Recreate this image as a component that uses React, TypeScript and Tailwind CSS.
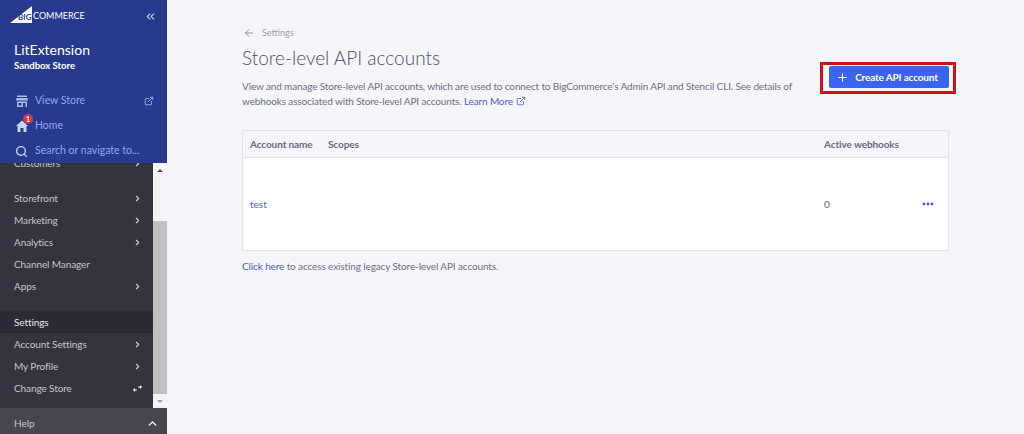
import React from "react";
import { ChevronsLeft, ChevronRight, ChevronUp, ExternalLink, Search, Plus, ArrowLeft } from "lucide-react";

function NavRow({ label, chevron, active }: { label: string; chevron?: boolean; active?: boolean }) {
  return (
    <div className={`h-[22px] flex items-center pl-[14px] pr-[11px] justify-between text-[10px] tracking-[-0.1px] ${active ? "bg-[#2c2b35] text-[#e4e4ea]" : "text-[#c4c4cc]"}`}>
      <span>{label}</span>
      {chevron && <ChevronRight size={9} strokeWidth={3} className="text-[#d0d0d8]" />}
    </div>
  );
}

function Sidebar() {
  return (
    <aside className="w-[167px] h-[434px] shrink-0 flex flex-col bg-[#35343e]">
      <div className="h-[163px] shrink-0 bg-[#273a8f] flex flex-col relative z-10">
        <div className="h-[33px] pl-[10px] pr-[10px] flex items-center justify-between">
          <div className="relative h-[17px] w-[76px] mb-[5px]">
            <svg width="23" height="17" viewBox="0 0 23 17" className="absolute left-0 top-0">
              <path d="M0 17 L22 0 L22 17 Z" fill="#ffffff" />
            </svg>
            <span className="absolute left-[8px] top-[5px] text-[8px] leading-[12px] font-bold text-[#273a8f]">BIG</span>
            <span className="absolute left-[23px] top-[4px] text-[9px] leading-[12px] text-white">COMMERCE</span>
          </div>
          <ChevronsLeft size={13} className="text-[#c4d0f2]" />
        </div>
        <div className="pl-[14px] mt-[8px] text-[14px] leading-[18px] text-white">LitExtension</div>
        <div className="pl-[14px] mt-[1px] text-[9.5px] leading-[12px] font-bold text-white">Sandbox Store</div>
        <div className="h-[25px] mt-[16px] flex items-center pl-[16px] pr-[13px]">
          <svg width="12" height="12" viewBox="0 0 12 12" className="mr-[7px]" fill="#a8bbee">
            <path d="M1 0.5 H11 V2 H1 Z" />
            <path d="M0.5 3 H11.5 L12 5.5 H0 Z" />
            <path d="M1 6.5 H11 V12 H9.5 V8 H7 V12 H1 Z M2.5 8 V10.5 H5.5 V8 Z" fillRule="evenodd" />
          </svg>
          <span className="text-[10.5px] text-[#8ea6ee] flex-1">View Store</span>
          <ExternalLink size={10} className="text-[#a8bbee]" />
        </div>
        <div className="h-[25px] flex items-center pl-[16px] relative">
          <svg width="12" height="12" viewBox="0 0 12 12" className="mr-[7px]" fill="#c8d4f6">
            <path d="M6 0.5 L12 6 H10.5 V12 H7.5 V8 H4.5 V12 H1.5 V6 H0 Z" />
          </svg>
          <span className="text-[10.5px] text-[#8ea6ee]">Home</span>
          <span className="absolute left-[23px] top-[1px] w-[10px] h-[10px] rounded-full bg-[#db3643] text-white text-[7px] leading-[10px] font-bold text-center">1</span>
        </div>
        <div className="h-[25px] flex items-center pl-[15px] pt-[1px]">
          <Search size={13} strokeWidth={2.5} className="text-[#c8d4f6] mr-[7px]" />
          <span className="text-[10.5px] text-[#8ea6ee]">Search or navigate to...</span>
        </div>
      </div>
      <div className="h-[245px] flex overflow-hidden">
        <div className="w-[153px] shrink-0">
          <div className="-mt-[11px]">
            <NavRow label="Customers" chevron />
          </div>
          <div className="h-[13px]" />
          <NavRow label="Storefront" chevron />
          <NavRow label="Marketing" chevron />
          <NavRow label="Analytics" chevron />
          <NavRow label="Channel Manager" />
          <NavRow label="Apps" chevron />
          <div className="h-[14px]" />
          <NavRow label="Settings" active />
          <NavRow label="Account Settings" chevron />
          <NavRow label="My Profile" chevron />
          <div className="h-[22px] flex items-center pl-[14px] pr-[11px] justify-between text-[10px] tracking-[-0.1px] text-[#c4c4cc]">
            <span>Change Store</span>
            <svg width="9" height="7" viewBox="0 0 9 7" fill="none" stroke="#e4e4ea" strokeWidth="1.1">
              <path d="M0.5 5 H4 M2 3.6 L0.5 5 L2 6.4" />
              <path d="M8.5 2 H5 M7 0.6 L8.5 2 L7 3.4" />
            </svg>
          </div>
        </div>
        <div className="w-[14px] shrink-0 bg-[#f4f4f4] flex flex-col">
          <div className="h-[14px] flex items-center justify-center">
            <div className="w-0 h-0 border-x-[3px] border-x-transparent border-b-[3px] border-b-[#505050]" />
          </div>
          <div className="h-[44px]" />
          <div className="flex-1 bg-[#c1c1c1]" />
          <div className="h-[14px] flex items-center justify-center">
            <div className="w-0 h-0 border-x-[3px] border-x-transparent border-t-[3px] border-t-[#a3a3a3]" />
          </div>
        </div>
      </div>
      <div className="h-[26px] bg-[#47454f] flex items-center justify-between pl-[14px] pr-[8px] pt-[5px] text-[10px] text-[#c4c4cc]">
        <span>Help</span>
        <ChevronUp size={13} strokeWidth={2.5} className="text-white" />
      </div>
    </aside>
  );
}

export default function App() {
  return (
    <div className="w-[1024px] h-[434px] overflow-hidden flex bg-[#f5f6fa] text-[#5e637a] font-['Lato',sans-serif]">
      <Sidebar />
      <main className="flex-1 pl-[75px] pr-[75px] pt-[26px]">
        <div className="flex items-center h-[14px] text-[9px] text-[#9aa0b0]">
          <ArrowLeft size={12} className="text-[#8f94a8] ml-[1px] mr-[7px]" />
          <span>Settings</span>
        </div>
        <div className="flex justify-between">
          <div className="w-[556px]">
            <h1 className="mt-[5px] text-[19px] leading-[26px] font-light text-[#4d5166]">Store-level API accounts</h1>
            <p className="mt-[8px] text-[10px] leading-[15px] tracking-[-0.14px] text-[#6c7086]">
              View and manage Store-level API accounts, which are used to connect to BigCommerce's Admin API and Stencil CLI. See details of webhooks associated with Store-level API accounts.{" "}
              <span className="text-[#4e60c6]">Learn More <ExternalLink size={10} className="inline align-[-1px] ml-[1px]" /></span>
            </p>
          </div>
          <div className="mt-[22px] mr-[-7px] h-[32px] border-[3px] border-[#d2101c] pl-[6px] pr-[4px] pt-[1px] pb-[3px] flex">
            <button className="w-[120px] bg-[#3c64f4] rounded-[2px] flex items-center justify-center gap-[6px] pr-[4px] text-white text-[10px] tracking-[-0.15px] font-bold pt-[1px]">
              <Plus size={13} strokeWidth={2} />
              Create API account
            </button>
          </div>
        </div>
        <div className="mt-[21px] h-[121px] w-[707px] border border-[#e2e4ec] bg-white flex flex-col">
          <div className="h-[27px] shrink-0 bg-[#f5f6fa] border-b border-[#e2e4ec] flex items-center text-[10px] tracking-[-0.1px] font-bold text-[#666b80]">
            <span className="w-[78px] pl-[7px]">Account name</span>
            <span className="flex-1 pl-[7px]">Scopes</span>
            <span className="w-[124px]">Active webhooks</span>
          </div>
          <div className="flex-1 flex items-center text-[10px]">
            <span className="flex-1 pl-[7px] text-[#4e60c6]">test</span>
            <span className="w-[98px] text-[#666b80]">0</span>
            <svg width="12" height="4" viewBox="0 0 12 4" className="mr-[14px] mb-[1px]" fill="#4e60c6">
              <circle cx="2" cy="2" r="1.4" /><circle cx="6" cy="2" r="1.4" /><circle cx="10" cy="2" r="1.4" />
            </svg>
          </div>
        </div>
        <p className="mt-[8px] text-[10px] leading-[15px] tracking-[-0.12px] text-[#6c7086]">
          <span className="text-[#4e60c6]">Click here</span> to access existing legacy Store-level API accounts.
        </p>
      </main>
    </div>
  );
}
